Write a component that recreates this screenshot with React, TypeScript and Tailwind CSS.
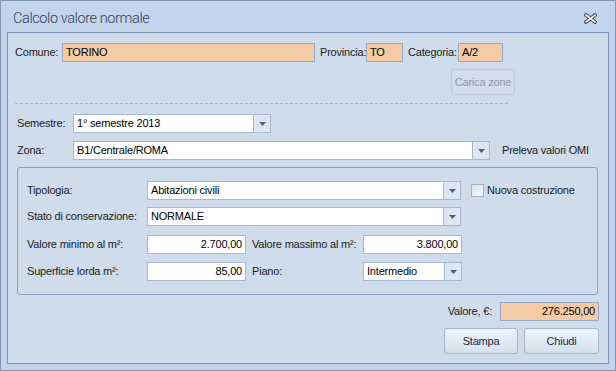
import React from "react";

const font = { fontFamily: "'Liberation Sans', Arial, sans-serif" };

const Arrow = () => (
  <svg width="7" height="4" viewBox="0 0 7 4">
    <path d="M0 0H7L3.5 4Z" fill="#56606e" />
  </svg>
);

const Field = ({ value, w, orange, right }: { value: string; w: string; orange?: boolean; right?: boolean }) => (
  <div
    className={`${w} shrink-0 h-[19px] border flex items-center px-[3px] text-black ${
      orange ? "bg-[#f4cba4] border-[#98aac6]" : "bg-white border-[#a6b8d2]"
    } ${right ? "justify-end" : ""}`}
  >
    {value}
  </div>
);

const Combo = ({ value, w }: { value: string; w: string }) => (
  <div className={`${w} shrink-0 h-[19px] border border-[#a6b8d2] bg-white flex`}>
    <div className="flex-1 flex items-center px-[3px] text-black">{value}</div>
    <div className="w-[17px] border-l border-[#a6b8d2] bg-[#dde7f3] flex items-center justify-center">
      <Arrow />
    </div>
  </div>
);

const Button = ({ label, w, disabled }: { label: string; w: string; disabled?: boolean }) => (
  <div
    className={`${w} h-[26px] rounded-[3px] border flex items-center justify-center ${
      disabled
        ? "border-[#bccbde] text-[#8d9aab] bg-[#d1ddec]"
        : "border-[#a6b5ca] text-[#1e2b3c] bg-gradient-to-b from-[#eef3fa] to-[#d5e0ee]"
    }`}
  >
    {label}
  </div>
);

export default function App() {
  return (
    <div style={font} className="w-[616px] h-[371px] border border-[#8496ad] bg-[#c3d5ec] flex flex-col text-[11px] text-[#1b1b1b] tracking-[-0.2px]">
      {/* title bar */}
      <div className="h-[31px] flex items-center justify-between pl-[12px] pr-[18px]">
        <span
          className="text-[14.5px] font-light text-[#2f425b] pt-[4px] tracking-[-0.4px]"
          style={{ fontFamily: "Roboto, 'Liberation Sans', sans-serif" }}
        >
          Calcolo valore normale
        </span>
        <svg width="13" height="11" viewBox="0 0 13 11" className="mt-[4px]">
          <path d="M2 2L11 9M11 2L2 9" stroke="#3a4350" strokeWidth="3.6" strokeLinecap="square" />
          <path d="M2 2L11 9M11 2L2 9" stroke="#ffffff" strokeWidth="1.6" strokeLinecap="square" />
        </svg>
      </div>

      {/* main panel */}
      <div className="mx-[6px] mb-[6px] h-[332px] border border-[#7a93b8] bg-[#cfdcec] pl-[7px] flex flex-col">
        <div className="flex items-center mt-[10px] whitespace-nowrap">
          <span className="w-[47px] shrink-0">Comune:</span>
          <Field value="TORINO" w="w-[253px]" orange />
          <span className="ml-[5px] w-[46px] shrink-0">Provincia:</span>
          <Field value="TO" w="w-[37px]" orange />
          <span className="ml-[5px] w-[50px] shrink-0">Categoria:</span>
          <Field value="A/2" w="w-[45px]" orange />
        </div>

        <div className="mt-[7px] ml-[436px]">
          <Button label="Carica zone" w="w-[64px]" disabled />
        </div>

        <div className="mt-[8px] w-[493px] border-t border-dashed border-[#a9b8cc]" />

        <div className="flex items-center mt-[10px] pl-[2px]">
          <span className="w-[56px] shrink-0">Semestre:</span>
          <Combo value="1° semestre 2013" w="w-[198px]" />
        </div>

        <div className="flex items-center mt-[8px] pl-[2px]">
          <span className="w-[56px] shrink-0">Zona:</span>
          <Combo value="B1/Centrale/ROMA" w="w-[417px]" />
          <span className="ml-[12px] whitespace-nowrap">Preleva valori OMI</span>
        </div>

        {/* group box */}
        <div className="mt-[7px] ml-[2px] w-[581px] h-[128px] border border-[#8aa1c2] rounded-[3px] pl-[9px] pt-[13px] flex flex-col whitespace-nowrap">
          <div className="flex items-center">
            <span className="w-[120px] shrink-0">Tipologia:</span>
            <Combo value="Abitazioni civili" w="w-[314px]" />
            <div className="ml-[10px] w-[13px] h-[13px] border border-[#a7b2c2] bg-gradient-to-br from-[#dfe4ea] to-[#f4f6f9]" />
            <span className="ml-[3px]">Nuova costruzione</span>
          </div>
          <div className="flex items-center mt-[7px]">
            <span className="w-[120px] shrink-0">Stato di conservazione:</span>
            <Combo value="NORMALE" w="w-[314px]" />
          </div>
          <div className="flex items-center mt-[9px]">
            <span className="w-[120px] shrink-0">Valore minimo al m²:</span>
            <Field value="2.700,00" w="w-[99px]" right />
            <span className="ml-[6px] w-[111px] shrink-0">Valore massimo al m²:</span>
            <Field value="3.800,00" w="w-[99px]" right />
          </div>
          <div className="flex items-center mt-[8px]">
            <span className="w-[120px] shrink-0">Superficie lorda m²:</span>
            <Field value="85,00" w="w-[99px]" right />
            <span className="ml-[6px] w-[111px] shrink-0">Piano:</span>
            <Combo value="Intermedio" w="w-[99px]" />
          </div>
        </div>

        <div className="flex items-center justify-end mt-[7px] pr-[9px]">
          <span className="mr-[8px]">Valore, €:</span>
          <Field value="276.250,00" w="w-[99px]" orange right />
        </div>

        <div className="flex justify-end gap-[6px] mt-[7px] pr-[9px]">
          <Button label="Stampa" w="w-[74px]" />
          <Button label="Chiudi" w="w-[75px]" />
        </div>
      </div>
    </div>
  );
}
